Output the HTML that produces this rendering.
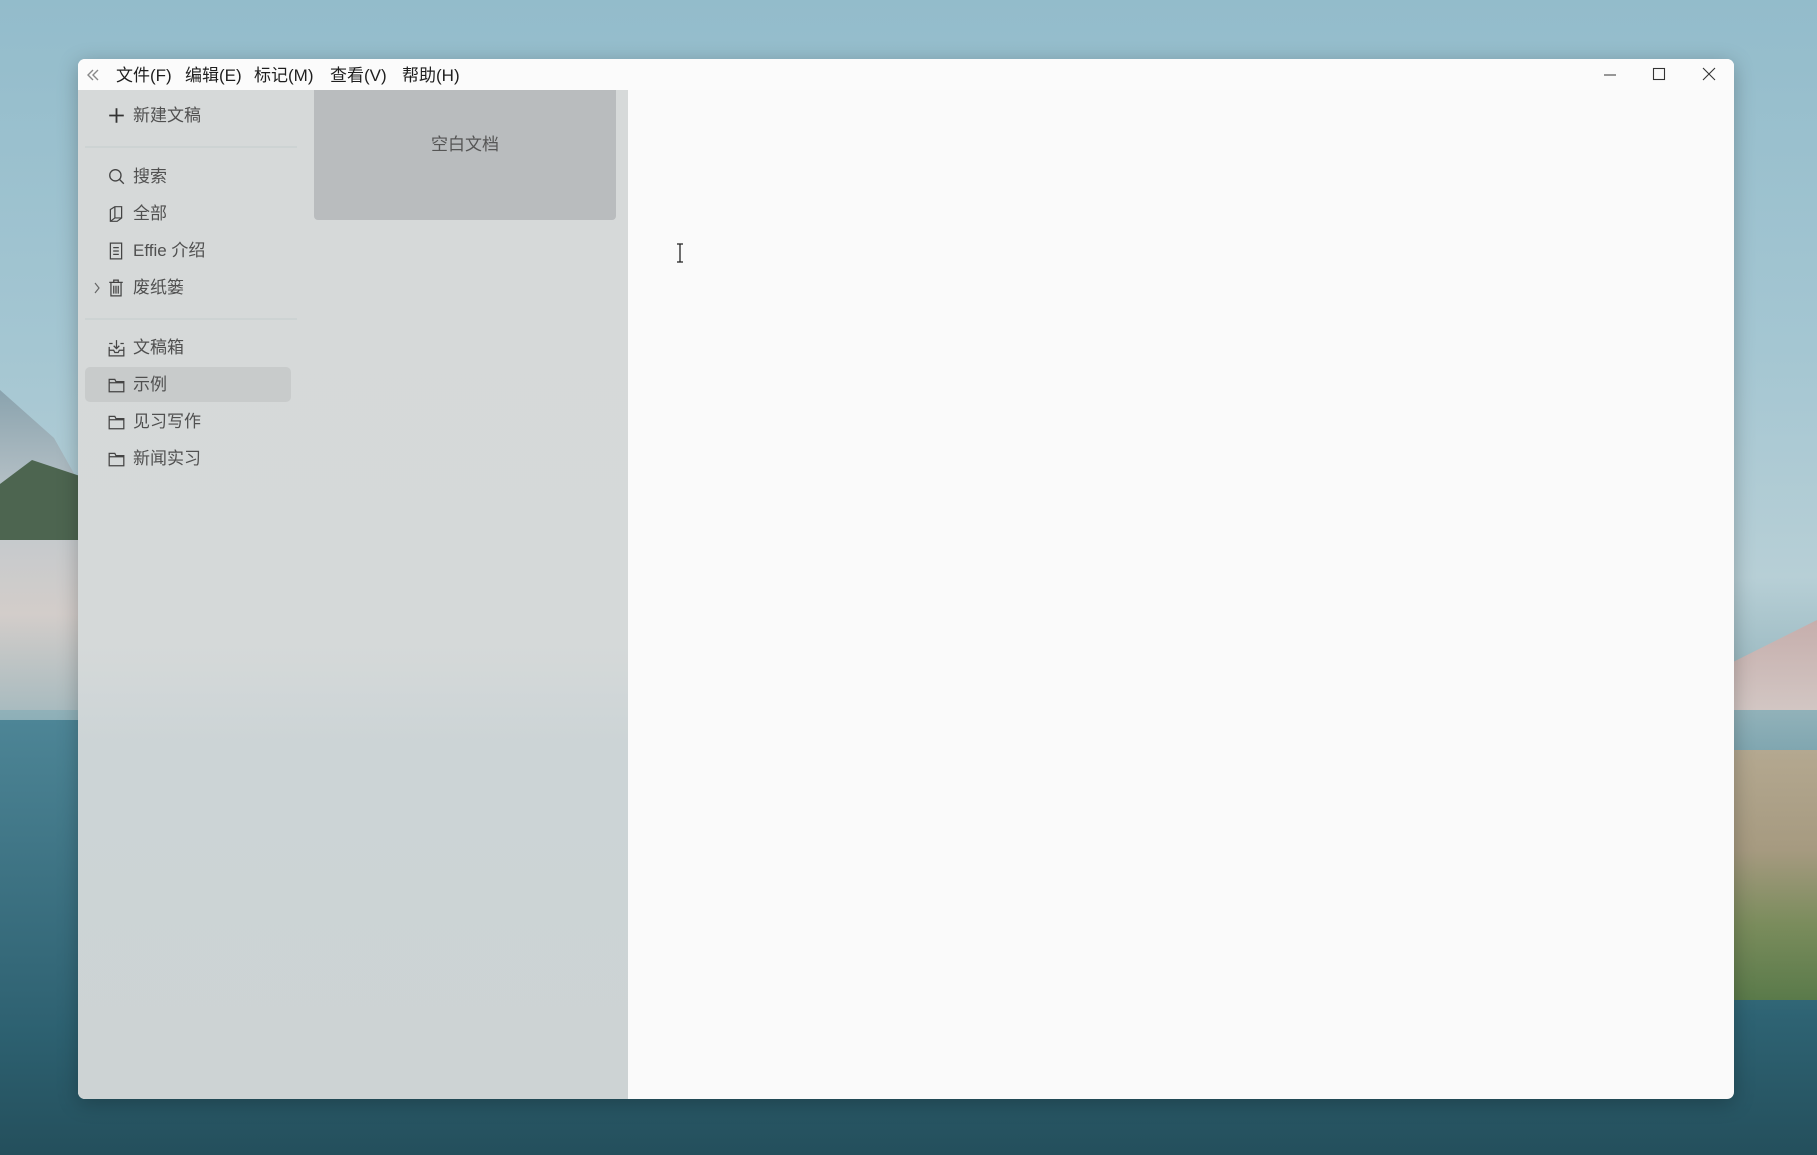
<!DOCTYPE html>
<html><head><meta charset="utf-8"><style>
*{margin:0;padding:0;box-sizing:border-box}
body{width:1817px;height:1155px;overflow:hidden;position:relative;font-family:"Liberation Sans","Noto Sans CJK SC",sans-serif;
background:linear-gradient(180deg,#93bccb 0%,#a4c6d2 30%,#b7cfd6 50%,#8fb0b8 62%,#4d8596 75%,#2e6373 88%,#244f5c 100%);}
.mtn{position:absolute;left:0;top:390px;width:90px;height:320px;background:linear-gradient(180deg,#8aa3ae,#c2c9cd 40%,#d3cdca 70%,#a9bbbf);clip-path:polygon(0 0,60% 15%,100% 35%,100% 100%,0 100%)}
.trees{position:absolute;left:0;top:460px;width:80px;height:80px;background:#4d6550;clip-path:polygon(0 30%,40% 0,100% 20%,100% 100%,0 100%)}
.rmtn{position:absolute;right:0;top:620px;width:90px;height:90px;background:linear-gradient(180deg,#c6aeac,#d2c6c3);clip-path:polygon(0 50%,100% 0,100% 100%,0 100%)}
.grass{position:absolute;right:0;top:750px;width:90px;height:250px;background:linear-gradient(180deg,#b4a890,#a69a80 40%,#7a8c5c 70%,#5a7a4a)}
.lwater{position:absolute;left:0;top:720px;width:80px;height:300px;background:linear-gradient(180deg,#4d8596,#2f6272)}
.win{position:absolute;left:78px;top:59px;width:1656px;height:1040px;border-radius:7px;overflow:hidden;background:#fafafa;box-shadow:0 4px 20px rgba(0,0,0,.25)}
.title{position:absolute;left:0;top:0;width:100%;height:31px;background:#fbfbfb;font-size:17px;color:#1f1f1f}
.title span{position:absolute;top:2px}
.side{position:absolute;left:0;top:31px;width:550px;height:1009px;background:linear-gradient(180deg,#d6d9d9 0%,#d5d9d9 55%,#ccd4d6 65%,#cdd3d4 100%)}
.card{position:absolute;left:236px;top:0;width:302px;height:130px;background:#b9bcbe;border-radius:0 0 4px 4px;color:#555;font-size:17px;text-align:center;line-height:110px}
.it{position:absolute;left:30px;font-size:17px;color:#505050;height:24px;line-height:24px}
.it svg{position:absolute;left:0;top:3px}
.it b{font-weight:normal;position:absolute;left:25px;white-space:nowrap}
.div{position:absolute;left:7px;width:212px;height:2px;background:#cdd3d3}
.sel{position:absolute;left:7px;top:277px;width:206px;height:35px;background:#c8cbcb;border-radius:5px}
</style></head><body>
<div class="lwater"></div><div class="mtn"></div><div class="trees"></div><div class="rmtn"></div><div class="grass"></div>
<div class="win">
<div class="title">
<svg style="position:absolute;left:7px;top:8px" width="16" height="16" viewBox="0 0 16 16" fill="none" stroke="#888" stroke-width="1.4"><path d="M8 3L3 8l5 5M13 3L8 8l5 5"/></svg>
<span style="left:38px">文件(F)</span><span style="left:107px">编辑(E)</span><span style="left:176px">标记(M)</span><span style="left:252px">查看(V)</span><span style="left:324px">帮助(H)</span>
<svg style="position:absolute;left:1525px;top:8px" width="14" height="14" viewBox="0 0 14 14" stroke="#333" stroke-width="1.1" fill="none"><path d="M1 8h12"/></svg>
<svg style="position:absolute;left:1574px;top:8px" width="14" height="14" viewBox="0 0 14 14" stroke="#333" stroke-width="1.1" fill="none"><rect x="1.5" y="1.5" width="11" height="11"/></svg>
<svg style="position:absolute;left:1624px;top:8px" width="14" height="14" viewBox="0 0 14 14" stroke="#333" stroke-width="1.1" fill="none"><path d="M1 1l12 12M13 1L1 13"/></svg>
</div>
<div class="side">
<div class="card">空白文档</div>
<div class="it" style="top:14px"><svg width="17" height="17" viewBox="0 0 14 14" stroke="#333" stroke-width="1.5"><path d="M7 1v12M1 7h12"/></svg><b>新建文稿</b></div>
<div class="div" style="top:56px"></div>
<div class="it" style="top:75px"><svg width="17" height="18" viewBox="0 0 15 16" fill="none" stroke="#444" stroke-width="1.2"><circle cx="6.5" cy="6.5" r="5"/><path d="M10 10l4 4"/></svg><b>搜索</b></div>
<div class="it" style="top:112px"><svg width="16" height="18" viewBox="0 0 14 16" fill="none" stroke="#444" stroke-width="1.1"><path d="M2 4l4-2.5h6v10l-4 3H2z M6 1.5v10l-4 3M6 11.5h6"/></svg><b>全部</b></div>
<div class="it" style="top:149px"><svg width="16" height="18" viewBox="0 0 14 16" fill="none" stroke="#444" stroke-width="1.1"><rect x="2" y="1" width="10" height="14"/><path d="M4.5 5h5M4.5 8h5M4.5 11h5"/></svg><b>Effie 介绍</b></div>
<div class="it" style="top:186px"><svg style="left:-15px;top:6px" width="8" height="12" viewBox="0 0 8 12" fill="none" stroke="#666" stroke-width="1.2"><path d="M2 1l4 5-4 5"/></svg><svg width="16" height="18" viewBox="0 0 14 16" fill="none" stroke="#444" stroke-width="1.1"><path d="M1 3h12M5 3V1h4v2M2.5 3v12h9V3M5 6v7M7 6v7M9 6v7"/></svg><b>废纸篓</b></div>
<div class="div" style="top:228px"></div>
<div class="sel"></div>
<div class="it" style="top:246px"><svg width="17" height="18" viewBox="0 0 15 16" fill="none" stroke="#444" stroke-width="1.1"><path d="M1 7v8h13V7M4 4H1M11 4h3M1 10h4l1 2h3l1-2h4M7.5 1v7M5 6l2.5 2.5L10 6"/></svg><b>文稿箱</b></div>
<div class="it" style="top:283px"><svg width="17" height="18" viewBox="0 0 15 16" fill="none" stroke="#444" stroke-width="1.1"><path d="M1 3h5l1 2h7v9H1z M1 6h13"/></svg><b>示例</b></div>
<div class="it" style="top:320px"><svg width="17" height="18" viewBox="0 0 15 16" fill="none" stroke="#444" stroke-width="1.1"><path d="M1 3h5l1 2h7v9H1z M1 6h13"/></svg><b>见习写作</b></div>
<div class="it" style="top:357px"><svg width="17" height="18" viewBox="0 0 15 16" fill="none" stroke="#444" stroke-width="1.1"><path d="M1 3h5l1 2h7v9H1z M1 6h13"/></svg><b>新闻实习</b></div>
</div>
<svg style="position:absolute;left:598px;top:184px" width="8" height="20" viewBox="0 0 8 20" fill="none" stroke="#222" stroke-width="1.3"><path d="M1 1h6M1 19h6M4 1v18"/></svg>
</div>
</body></html>
